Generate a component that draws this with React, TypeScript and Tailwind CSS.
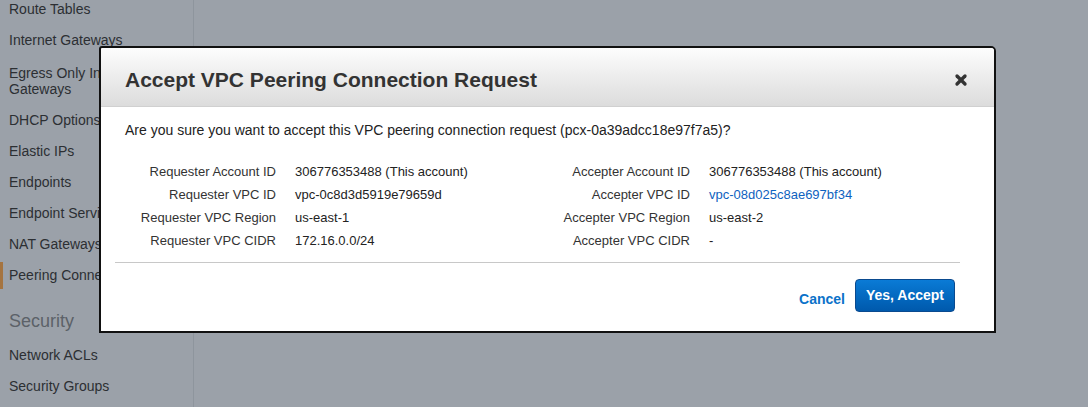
import { X } from "lucide-react";

const navItems = [
  "Route Tables",
  "Internet Gateways",
  "Egress Only Internet Gateways",
  "DHCP Options Sets",
  "Elastic IPs",
  "Endpoints",
  "Endpoint Services",
  "NAT Gateways",
];

const securityItems = ["Network ACLs", "Security Groups"];

const details = [
  ["Requester Account ID", "306776353488 (This account)", "Accepter Account ID", "306776353488 (This account)"],
  ["Requester VPC ID", "vpc-0c8d3d5919e79659d", "Accepter VPC ID", "vpc-08d025c8ae697bf34"],
  ["Requester VPC Region", "us-east-1", "Accepter VPC Region", "us-east-2"],
  ["Requester VPC CIDR", "172.16.0.0/24", "Accepter VPC CIDR", "-"],
];

const App = () => {
  return (
    <div className="relative h-[407px] w-[1088px] overflow-hidden bg-[#9ba1a9] font-['Liberation_Sans',Arial,sans-serif]">
      <div className="flex h-full">
        {/* sidebar, dimmed by the modal backdrop */}
        <aside className="h-full w-[194px] shrink-0 border-r border-[#8e959d]">
          <ul className="-mt-[6.5px] text-[14px] leading-[16px] text-[#2c2f33]">
            {navItems.map((item) => (
              <li
                key={item}
                className={item.startsWith("Egress") ? "pb-[8px] pl-[9px] pr-[10px] pt-[9px]" : "py-[7.5px] pl-[9px] pr-[10px]"}
              >
                {item}
              </li>
            ))}
            <li className="relative py-[7.5px] pl-[9px] pr-[10px]">
              <span className="absolute left-0 top-[2px] bottom-[2px] w-[3px] bg-[#a57440]" />
              Peering Connections
            </li>
            <li className="pl-[9px] pb-[7.5px] pt-[19.5px] text-[18px] leading-[22px] text-[#5c6168]">Security</li>
            {securityItems.map((item) => (
              <li key={item} className="py-[7.5px] pl-[9px]">
                {item}
              </li>
            ))}
          </ul>
        </aside>
        <main className="flex-1" />
      </div>

      {/* modal */}
      <div className="absolute left-[99px] top-[46px] w-[897px] rounded-tr-[5px] rounded-tl-[3px] border-2 border-[#111] bg-white">
        <div className="flex h-[59px] items-center justify-between rounded-t-[3px] border-b border-[#d0d0d0] bg-gradient-to-b from-[#fdfdfd] to-[#dcdcdc] pl-[24px] pr-[25px]">
          <h2 className="pt-[6px] text-[21px] font-bold text-[#333]">Accept VPC Peering Connection Request</h2>
          <X className="mt-[5px] h-[16px] w-[16px] text-[#333]" strokeWidth={5} />
        </div>

        <div className="px-[24px]">
          <p className="pt-[14px] text-[14px] leading-[18px] text-[#222]">
            Are you sure you want to accept this VPC peering connection request (pcx-0a39adcc18e97f7a5)?
          </p>
          <div className="mt-[21px] grid grid-cols-[151px_245px_131px_1fr] gap-x-[19px] text-[13px] leading-[23px]">
            {details.map((row) => (
              <div key={row[0]} className="contents">
                <span className="text-right text-[#333]">{row[0]}</span>
                <span className="text-[#222]">{row[1]}</span>
                <span className="text-right text-[#333]">{row[2]}</span>
                <span className={row[2] === "Accepter VPC ID" ? "text-[#0e62c0]" : "text-[#222]"}>{row[3]}</span>
              </div>
            ))}
          </div>
        </div>

        <div className="ml-[14px] mr-[34px] mt-[10px] border-t border-[#c8c8c8]" />

        <div className="flex items-center justify-end gap-[10px] pb-[19px] pr-[39px] pt-[16px]">
          <button className="mt-[8px] text-[14px] font-bold text-[#0b72c9]">Cancel</button>
          <button className="h-[33px] w-[100px] rounded-[4px] border border-[#0a4a8f] bg-gradient-to-b from-[#0b7bd6] to-[#0059ac] text-[14px] font-bold text-white">
            Yes, Accept
          </button>
        </div>
      </div>
    </div>
  );
};

export default App;
